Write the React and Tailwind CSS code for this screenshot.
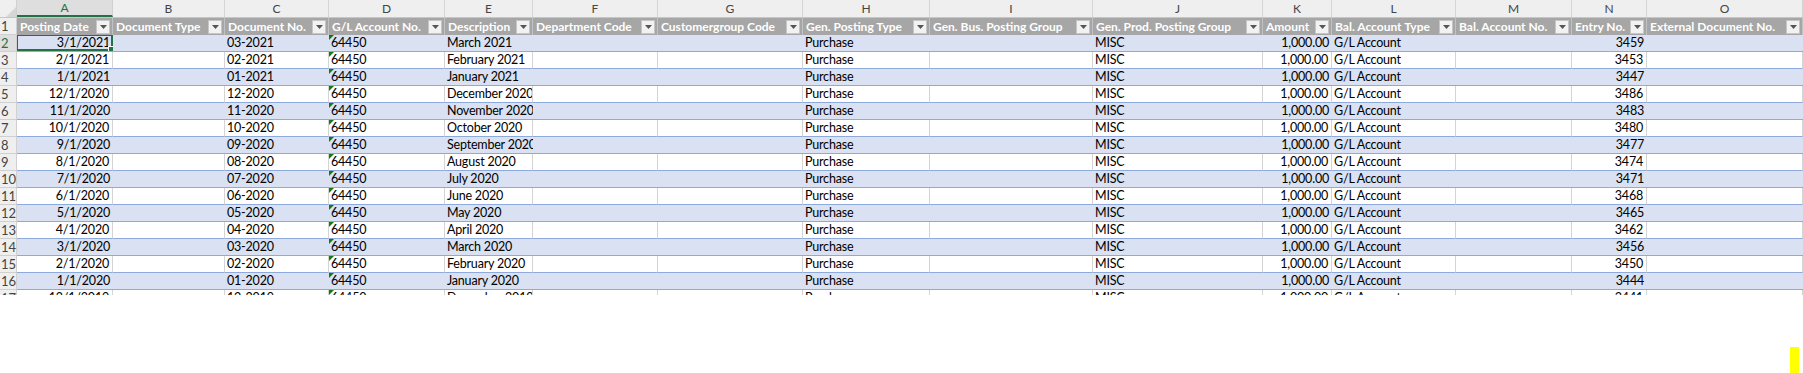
const cols = [
  { key: "A", w: "w-[96px]", head: "Posting Date", align: "right" },
  { key: "B", w: "w-[112px]", head: "Document Type", align: "left" },
  { key: "C", w: "w-[104px]", head: "Document No.", align: "left" },
  { key: "D", w: "w-[116px]", head: "G/L Account No.", align: "left" },
  { key: "E", w: "w-[88px]", head: "Description", align: "left" },
  { key: "F", w: "w-[125px]", head: "Department Code", align: "left" },
  { key: "G", w: "w-[145px]", head: "Customergroup Code", align: "left" },
  { key: "H", w: "w-[127px]", head: "Gen. Posting Type", align: "left" },
  { key: "I", w: "w-[163px]", head: "Gen. Bus. Posting Group", align: "left" },
  { key: "J", w: "w-[170px]", head: "Gen. Prod. Posting Group", align: "left" },
  { key: "K", w: "w-[69px]", head: "Amount", align: "right" },
  { key: "L", w: "w-[124px]", head: "Bal. Account Type", align: "left" },
  { key: "M", w: "w-[116px]", head: "Bal. Account No.", align: "left" },
  { key: "N", w: "w-[75px]", head: "Entry No.", align: "right" },
  { key: "O", w: "w-[156px]", head: "External Document No.", align: "left" },
];

const entries = [
  ["3/1/2021", "03-2021", "March 2021", "3459"],
  ["2/1/2021", "02-2021", "February 2021", "3453"],
  ["1/1/2021", "01-2021", "January 2021", "3447"],
  ["12/1/2020", "12-2020", "December 2020", "3486"],
  ["11/1/2020", "11-2020", "November 2020", "3483"],
  ["10/1/2020", "10-2020", "October 2020", "3480"],
  ["9/1/2020", "09-2020", "September 2020", "3477"],
  ["8/1/2020", "08-2020", "August 2020", "3474"],
  ["7/1/2020", "07-2020", "July 2020", "3471"],
  ["6/1/2020", "06-2020", "June 2020", "3468"],
  ["5/1/2020", "05-2020", "May 2020", "3465"],
  ["4/1/2020", "04-2020", "April 2020", "3462"],
  ["3/1/2020", "03-2020", "March 2020", "3456"],
  ["2/1/2020", "02-2020", "February 2020", "3450"],
  ["1/1/2020", "01-2020", "January 2020", "3444"],
  ["12/1/2019", "12-2019", "December 2019", "3441"],
];

// row values keyed by column letter
const toRow = ([date, doc, desc, entry]) => ({
  A: date,
  B: "",
  C: doc,
  D: "64450",
  E: desc,
  F: "",
  G: "",
  H: "Purchase",
  I: "",
  J: "MISC",
  K: "1,000.00",
  L: "G/L Account",
  M: "",
  N: entry,
  O: "",
});

const FilterButton = () => (
  <span className="ml-auto mr-[2px] shrink-0 w-[14px] h-[14px] bg-[#f2f2f2] border border-[#c6c6c6] flex items-center justify-center">
    <svg width="7" height="4" viewBox="0 0 7 4">
      <path d="M0 0H7L3.5 4Z" fill="#555555" />
    </svg>
  </span>
);

const App = () => {
  const rows = entries.map(toRow);

  return (
    <div className="w-[1803px] h-[373px] bg-white overflow-hidden font-['Lato',sans-serif] text-[12.5px] text-black">
      <div className="h-[295px] overflow-hidden">
        {/* Column letters */}
        <div className="flex h-[18px] bg-[#efefef] border-b border-[#c6c6c6]">
          <div className="w-[17px] shrink-0 border-r border-[#d0d0d0] flex items-end justify-end">
            <svg width="10" height="10" viewBox="0 0 10 10">
              <path d="M10 0V10H0Z" fill="#d6d6d6" />
            </svg>
          </div>
          {cols.map((c) => (
            <div
              key={c.key}
              className={`${c.w} shrink-0 flex items-center justify-center text-[12px] ${
                c.key === "A"
                  ? "bg-[#dedede] text-[#217346] border-b-2 border-[#217346] border-r border-r-[#d0d0d0]"
                  : "text-[#444444] border-r border-[#d5d5d5]"
              }`}
            >
              {c.key}
            </div>
          ))}
        </div>

        {/* Table header row */}
        <div className="flex h-[17px]">
          <div className="w-[17px] shrink-0 bg-[#efefef] border-r border-b border-[#d0d0d0] pl-[1px] text-[13px] text-[#444444] leading-[16px]">
            1
          </div>
          {cols.map((c) => (
            <div
              key={c.key}
              className={`${c.w} shrink-0 bg-[#a6a6a6] border-r border-[#c2c2c2] flex items-center overflow-hidden`}
            >
              <span className="flex-1 min-w-0 overflow-hidden whitespace-nowrap pl-[3px] text-[12px] font-bold text-white">
                {c.head}
              </span>
              <FilterButton />
            </div>
          ))}
        </div>

        {/* Data rows */}
        {rows.map((row, i) => {
          const rowNum = i + 2;
          const banded = i % 2 === 0;
          return (
            <div key={rowNum} className="flex h-[17px]">
              <div
                className={`w-[17px] shrink-0 border-r border-b border-[#d0d0d0] pl-[1px] text-[13px] leading-[16px] ${
                  rowNum === 2 ? "bg-[#dedede] text-[#217346]" : "bg-[#efefef] text-[#444444]"
                }`}
              >
                {rowNum}
              </div>
              {cols.map((c) => (
                <div
                  key={c.key}
                  className={`${c.w} shrink-0 relative border-b border-b-[#8ea9db] flex items-center overflow-hidden whitespace-nowrap tracking-[-0.2px] ${
                    banded ? "bg-[#d9e1f2]" : "bg-white border-r border-r-[#d4d4d4]"
                  } ${c.align === "right" ? "justify-end pr-[3px]" : "justify-start pl-[2px]"}`}
                >
                  {c.key === "D" && (
                    <span className="absolute top-0 left-0 w-0 h-0 border-t-[5px] border-t-[#107c10] border-r-[5px] border-r-transparent" />
                  )}
                  <span className="leading-[16px]">{row[c.key]}</span>
                  {rowNum === 2 && c.key === "A" && (
                    <>
                      <span className="absolute -top-[1px] -left-[1px] right-0 bottom-0 border-2 border-[#217346]" />
                      <span className="absolute right-[-1px] bottom-[-1px] w-[6px] h-[6px] bg-[#217346] border-l border-t border-white" />
                    </>
                  )}
                </div>
              ))}
            </div>
          );
        })}
      </div>

      <div className="flex justify-end pr-[4px] pt-[52px]">
        <div className="w-[9px] h-[26px] bg-[#ffff00]" />
      </div>
    </div>
  );
};

export default App;
